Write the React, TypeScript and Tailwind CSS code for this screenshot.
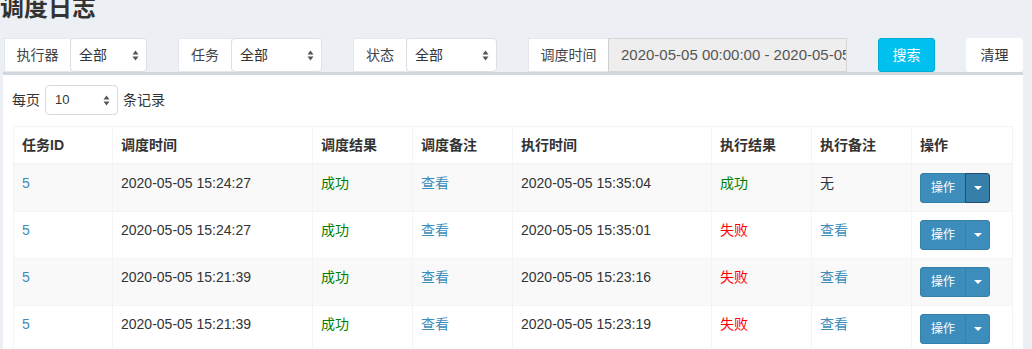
import React from "react";

const FONT = "font-[family-name:'Liberation_Sans','Noto_Sans_CJK_SC',sans-serif]";

function Arrows() {
  return (
    <svg width="7" height="11" viewBox="0 0 7 11" className="shrink-0">
      <path d="M3.5 0.5 L6.5 4.5 L0.5 4.5 Z" fill="#555" />
      <path d="M3.5 10.5 L6.5 6.5 L0.5 6.5 Z" fill="#555" />
    </svg>
  );
}

function FilterSelect({ label, labelW, selectW }: { label: string; labelW: string; selectW: string }) {
  return (
    <div className="flex h-[34px]">
      <div className={`${labelW} h-[34px] bg-white border border-[#e4e7ec] border-r-0 flex items-center justify-center text-[14px] text-[#444]`}>
        {label}
      </div>
      <div className={`${selectW} h-[34px] bg-white border border-[#dcdfe4] rounded-[4px] flex items-center justify-between pl-[8px] pr-[7px] text-[14px] text-[#333]`}>
        <span>全部</span>
        <Arrows />
      </div>
    </div>
  );
}

type Row = {
  t1: string;
  t2: string;
  ok2: boolean;
  note2: string;
  active?: boolean;
};

const rows: Row[] = [
  { t1: "2020-05-05 15:24:27", t2: "2020-05-05 15:35:04", ok2: true, note2: "无", active: true },
  { t1: "2020-05-05 15:24:27", t2: "2020-05-05 15:35:01", ok2: false, note2: "查看" },
  { t1: "2020-05-05 15:21:39", t2: "2020-05-05 15:23:16", ok2: false, note2: "查看" },
  { t1: "2020-05-05 15:21:39", t2: "2020-05-05 15:23:19", ok2: false, note2: "查看" },
];

const td = "border border-[#f4f4f4] px-[8px] pt-[8px] pb-[8px] align-top leading-[20px] text-[14px]";
const th = "border border-[#f4f4f4] border-b-2 px-[8px] py-[8px] text-left align-bottom leading-[20px] text-[14px] font-bold";

export default function App() {
  return (
    <div className={`w-[1032px] h-[349px] overflow-hidden bg-[#ecf0f5] text-[#333] ${FONT}`}>
      <h1 className="text-[24px] leading-[26px] font-semibold text-[#333] -mt-[5px] h-[26px]">调度日志</h1>

      <div className="mt-[17px] ml-[4px] flex gap-[31px] h-[34px]">
        <FilterSelect label="执行器" labelW="w-[66px]" selectW="w-[77px]" />
        <FilterSelect label="任务" labelW="w-[53px]" selectW="w-[91px]" />
        <FilterSelect label="状态" labelW="w-[53px]" selectW="w-[91px]" />
        <div className="flex h-[34px] w-[319px]">
          <div className="w-[81px] h-[34px] bg-white border border-[#e4e7ec] border-r-[#d0d0d0] flex items-center justify-center text-[14px] text-[#444]">
            调度时间
          </div>
          <div className="flex-1 h-[34px] bg-[#eeeeee] border border-[#d6d6d6] border-l-0 flex items-center pl-[12px] overflow-hidden whitespace-nowrap text-[15px] text-[#555]">
            2020-05-05 00:00:00 - 2020-05-05 23:59:59
          </div>
        </div>
        <div className="w-[57px] h-[34px] rounded-[3px] bg-[#00c0ef] border border-[#00acd6] text-white text-[14px] flex items-center justify-center">
          搜索
        </div>
        <div className="w-[57px] h-[34px] rounded-[3px] bg-white border border-white text-[#333] text-[14px] flex items-center justify-center">
          清理
        </div>
      </div>

      <div className="mt-0 ml-[3px] w-[1020px] bg-white border-t-[3px] border-[#d2d6de] px-[10px] pt-[10px]">
        <div className="flex items-center h-[30px] text-[14px]">
          <span className="ml-[-1px]">每页</span>
          <div className="ml-[5px] w-[73px] h-[30px] border border-[#d6d9de] rounded-[4px] flex items-center justify-between pl-[9px] pr-[7px] text-[13px]">
            <span>10</span>
            <Arrows />
          </div>
          <span className="ml-[5px]">条记录</span>
        </div>

        <table className="mt-[11px] w-[999px] table-fixed border-collapse">
          <colgroup>
            <col className="w-[99px]" />
            <col className="w-[200px]" />
            <col className="w-[100px]" />
            <col className="w-[100px]" />
            <col className="w-[199px]" />
            <col className="w-[100px]" />
            <col className="w-[100px]" />
            <col className="w-[101px]" />
          </colgroup>
          <thead>
            <tr>
              <th className={th}>任务ID</th>
              <th className={th}>调度时间</th>
              <th className={th}>调度结果</th>
              <th className={th}>调度备注</th>
              <th className={th}>执行时间</th>
              <th className={th}>执行结果</th>
              <th className={th}>执行备注</th>
              <th className={th}>操作</th>
            </tr>
          </thead>
          <tbody>
            {rows.map((r, i) => (
              <tr key={i} className={i % 2 === 0 ? "bg-[#f9f9f9]" : "bg-white"}>
                <td className={`${td} text-[#3c8dbc]`}>5</td>
                <td className={`${td} text-[13px]`}>{r.t1}</td>
                <td className={`${td} text-[#008000]`}>成功</td>
                <td className={`${td} text-[#3c8dbc]`}>查看</td>
                <td className={`${td} text-[13px]`}>{r.t2}</td>
                <td className={`${td} ${r.ok2 ? "text-[#008000]" : "text-[#ff0000]"}`}>{r.ok2 ? "成功" : "失败"}</td>
                <td className={`${td} ${r.note2 === "查看" ? "text-[#3c8dbc]" : "text-[#333]"}`}>{r.note2}</td>
                <td className={td}>
                  <div className="flex">
                    <div className="h-[30px] px-[10px] flex items-center bg-[#3c8dbc] border border-[#367fa9] rounded-l-[3px] text-white text-[12px] leading-[18px]">
                      操作
                    </div>
                    <div
                      className={`h-[30px] w-[25px] -ml-px flex items-center justify-center rounded-r-[3px] border ${
                        r.active ? "bg-[#367fa9] border-[#204d74]" : "bg-[#3c8dbc] border-[#367fa9]"
                      }`}
                    >
                      <div className="w-0 h-0 border-t-[4px] border-t-white border-x-[4px] border-x-transparent" />
                    </div>
                  </div>
                </td>
              </tr>
            ))}
          </tbody>
        </table>
      </div>
    </div>
  );
}
